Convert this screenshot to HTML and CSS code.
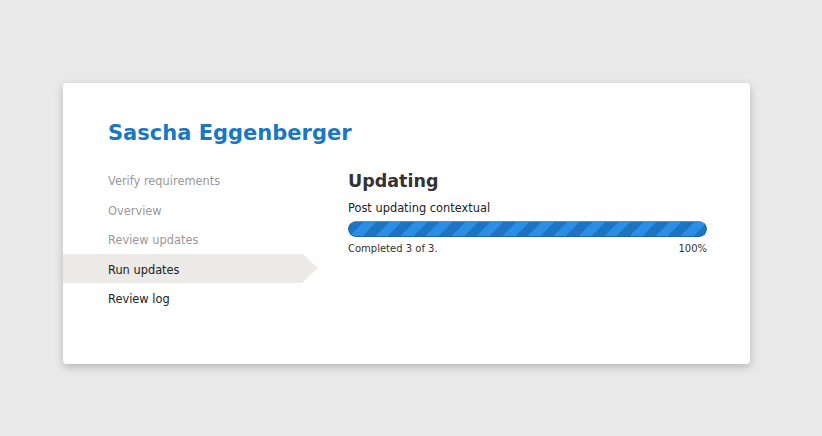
FILE: index.html
```html
<!DOCTYPE html>
<html>
<head>
<meta charset="utf-8">
<link rel="stylesheet" href="styles.css">
</head>
<body>
<div class="card">
  <h1 class="title">Sascha Eggenberger</h1>
  <div class="layout">
    <ul class="steps">
      <li class="step done">Verify requirements</li>
      <li class="step done">Overview</li>
      <li class="step done">Review updates</li>
      <li class="step active">Run updates</li>
      <li class="step">Review log</li>
    </ul>
    <div class="content">
      <h2 class="heading">Updating</h2>
      <div class="label">Post updating contextual</div>
      <div class="track"><div class="bar"></div></div>
      <div class="meta"><span>Completed 3 of 3.</span><span>100%</span></div>
    </div>
  </div>
</div>
</body>
</html>
```
FILE: styles.css
```css
html, body {
  margin: 0;
  padding: 0;
}
body {
  background: #e9e9e9;
  font-family: "DejaVu Sans", sans-serif;
  padding: 83px 0 0 63px;
  height: 436px;
  box-sizing: border-box;
}
.card {
  width: 687px;
  height: 281px;
  background: #fff;
  border-radius: 4px;
  box-shadow: 0 3px 8px rgba(0,0,0,0.22);
  box-sizing: border-box;
  padding-top: 35px;
}
.title {
  margin: 0 0 17px 45px;
  font-size: 21px;
  line-height: 30px;
  font-weight: bold;
  color: #1a78c2;
}
.layout {
  display: flex;
  gap: 45px;
}
.steps {
  list-style: none;
  margin: 0;
  padding: 0;
  width: 240px;
  flex: none;
}
.step {
  box-sizing: border-box;
  height: 29.5px;
  line-height: 26px;
  padding: 3px 0 0 45px;
  font-size: 11.4px;
  color: #222;
  position: relative;
}
.step.done {
  color: #999;
}
.step.active {
  background: #ebeae6;
}
.step.active::after {
  content: "";
  position: absolute;
  top: 0;
  right: -15px;
  border-style: solid;
  border-width: 14.75px 0 14.75px 15px;
  border-color: transparent transparent transparent #ebeae6;
}
.content {
  width: 359px;
}
.heading {
  margin: 0;
  font-size: 17.5px;
  line-height: 28px;
  font-weight: bold;
  color: #333;
  padding-top: 2px;
}
.label {
  font-size: 11.4px;
  line-height: 18px;
  margin-top: 4px;
  color: #222;
}
.track {
  margin-top: 4px;
  height: 16px;
  border-radius: 8px;
  overflow: hidden;
  background: #ddd;
}
.bar {
  height: 100%;
  width: 100%;
  border-radius: 8px;
  box-sizing: border-box;
  border: 1px solid #1a66ab;
  border-top-color: #5f8db8;
  background-color: #2a8fe4;
  background-image: repeating-linear-gradient(-45deg, #1f74c2 0 9px, #2a8fe4 9px 18px);
}
.meta {
  display: flex;
  justify-content: space-between;
  font-size: 10px;
  line-height: 14px;
  margin-top: 5px;
  color: #333;
}
```
